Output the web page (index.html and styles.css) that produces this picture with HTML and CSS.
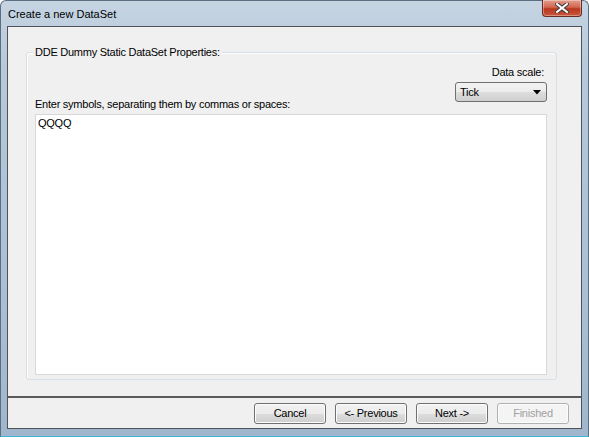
FILE: index.html
```html
<!DOCTYPE html>
<html lang="en">
<head>
  <meta charset="UTF-8">
  <title>Create a new DataSet</title>
  <link rel="stylesheet" href="styles.css">
</head>
<body>

  <div class="window">
    <div class="titlebar">
      <span class="title">Create a new DataSet</span>
      <div class="close-btn">
        <svg width="14" height="10" viewBox="0 0 14 10">
          <path d="M2 1 L12 9 M12 1 L2 9" stroke="#3a3a3a" stroke-width="4" stroke-linecap="square"/>
          <path d="M2 1 L12 9 M12 1 L2 9" stroke="#fff" stroke-width="2" stroke-linecap="square"/>
        </svg>
      </div>
    </div>

    <div class="client">
      <div class="content">
        <div class="groupbox">
          <span class="legend">DDE Dummy Static DataSet Properties:</span>
          <div class="scale-row">
            <span>Data scale:</span>
            <div class="select">
              <span>Tick</span>
              <svg width="8" height="5" viewBox="0 0 8 5"><path d="M0 0 H8 L4 4.5 Z" fill="#000"/></svg>
            </div>
          </div>
          <div class="label">Enter symbols, separating them by commas or spaces:</div>
          <div class="symbols">QQQQ</div>
        </div>
      </div>

      <div class="footer">
        <button class="btn">Cancel</button>
        <button class="btn">&lt;- Previous</button>
        <button class="btn">Next -&gt;</button>
        <button class="btn disabled">Finished</button>
      </div>
    </div>
  </div>

</body>
</html>
```

FILE: styles.css
```css
body {
  margin: 0;
  font-family: "Liberation Sans", Arial, sans-serif;
  font-size: 11px;
  letter-spacing: -0.25px;
  color: #000;
  background: #fff;
}

.window {
  width: 589px;
  height: 437px;
  box-sizing: border-box;
  background: linear-gradient(to bottom, #c6d4e2 0px, #b7c9da 60px, #aabfd3 300px, #9fb6cc 437px);
  border: 1px solid #5c6f82;
  border-bottom-color: #3fb4d8;
  border-radius: 6px 6px 0 0;
  display: flex;
  flex-direction: column;
  padding: 0 6px 7px 6px;
}

/* title bar */
.titlebar {
  height: 25px;
  display: flex;
  align-items: flex-start;
  justify-content: space-between;
}

.title {
  font-size: 11px;
  letter-spacing: 0;
  margin-top: 7px;
  margin-left: 1px;
  color: #000;
}

.close-btn {
  width: 38px;
  height: 16px;
  margin-top: -1px;
  border: 1px solid #6b2a22;
  border-top: none;
  border-radius: 0 0 4px 4px;
  background: linear-gradient(to bottom, #e2a08e 0%, #d26650 45%, #b8381f 55%, #c9573c 100%);
  display: flex;
  align-items: center;
  justify-content: center;
  box-shadow: inset 0 0 0 1px rgba(255,255,255,0.35);
}

/* client area */
.client {
  flex: 1;
  background: #f0f0f0;
  border: 1px solid #4f5258;
  display: flex;
  flex-direction: column;
}

.content {
  flex: 1;
  padding: 25px 24px 16px 18px;
  border-bottom: 2px solid #5a5a5a;
  display: flex;
}

.groupbox {
  flex: 1;
  position: relative;
  border: 1px solid #d5dfe5;
  border-radius: 3px;
  box-shadow: inset 1px 1px 0 #fff;
  padding: 13px 9px 4px 8px;
  display: flex;
  flex-direction: column;
}

.legend {
  position: absolute;
  top: -7px;
  left: 6px;
  background: #f0f0f0;
  padding: 0 2px;
  line-height: 13px;
}

.scale-row {
  display: flex;
  flex-direction: column;
  align-items: flex-end;
  gap: 4px;
}

.scale-row span {
  margin-right: 3px;
}

.select {
  width: 92px;
  height: 20px;
  box-sizing: border-box;
  border: 1px solid #707070;
  border-radius: 3px;
  background: linear-gradient(to bottom, #f2f2f2 0%, #ebebeb 50%, #dddddd 51%, #cfcfcf 100%);
  display: flex;
  align-items: center;
  justify-content: space-between;
  padding: 0 5px 0 4px;
}

.scale-row .select span {
  margin-right: 0;
}

.label {
  margin-top: -4px;
  line-height: 13px;
}

.symbols {
  flex: 1;
  margin-top: 3px;
  background: #fff;
  border: 1px solid #d8d8d8;
  padding: 2px 2px;
  line-height: 12px;
}

/* bottom buttons */
.footer {
  height: 30px;
  display: flex;
  align-items: center;
  justify-content: flex-end;
  gap: 9px;
  padding-right: 12px;
}

.btn {
  width: 72px;
  height: 21px;
  font-family: "Liberation Sans", Arial, sans-serif;
  font-size: 11px;
  letter-spacing: -0.25px;
  color: #000;
  border: 1px solid #707070;
  border-radius: 3px;
  background: linear-gradient(to bottom, #f2f2f2 0%, #ebebeb 50%, #dddddd 51%, #cfcfcf 100%);
  box-shadow: inset 0 0 0 1px #fcfcfc;
  padding: 0;
}

.btn.disabled {
  color: #a0a0a0;
  border-color: #adb2b5;
  background: #f4f4f4;
}
```
